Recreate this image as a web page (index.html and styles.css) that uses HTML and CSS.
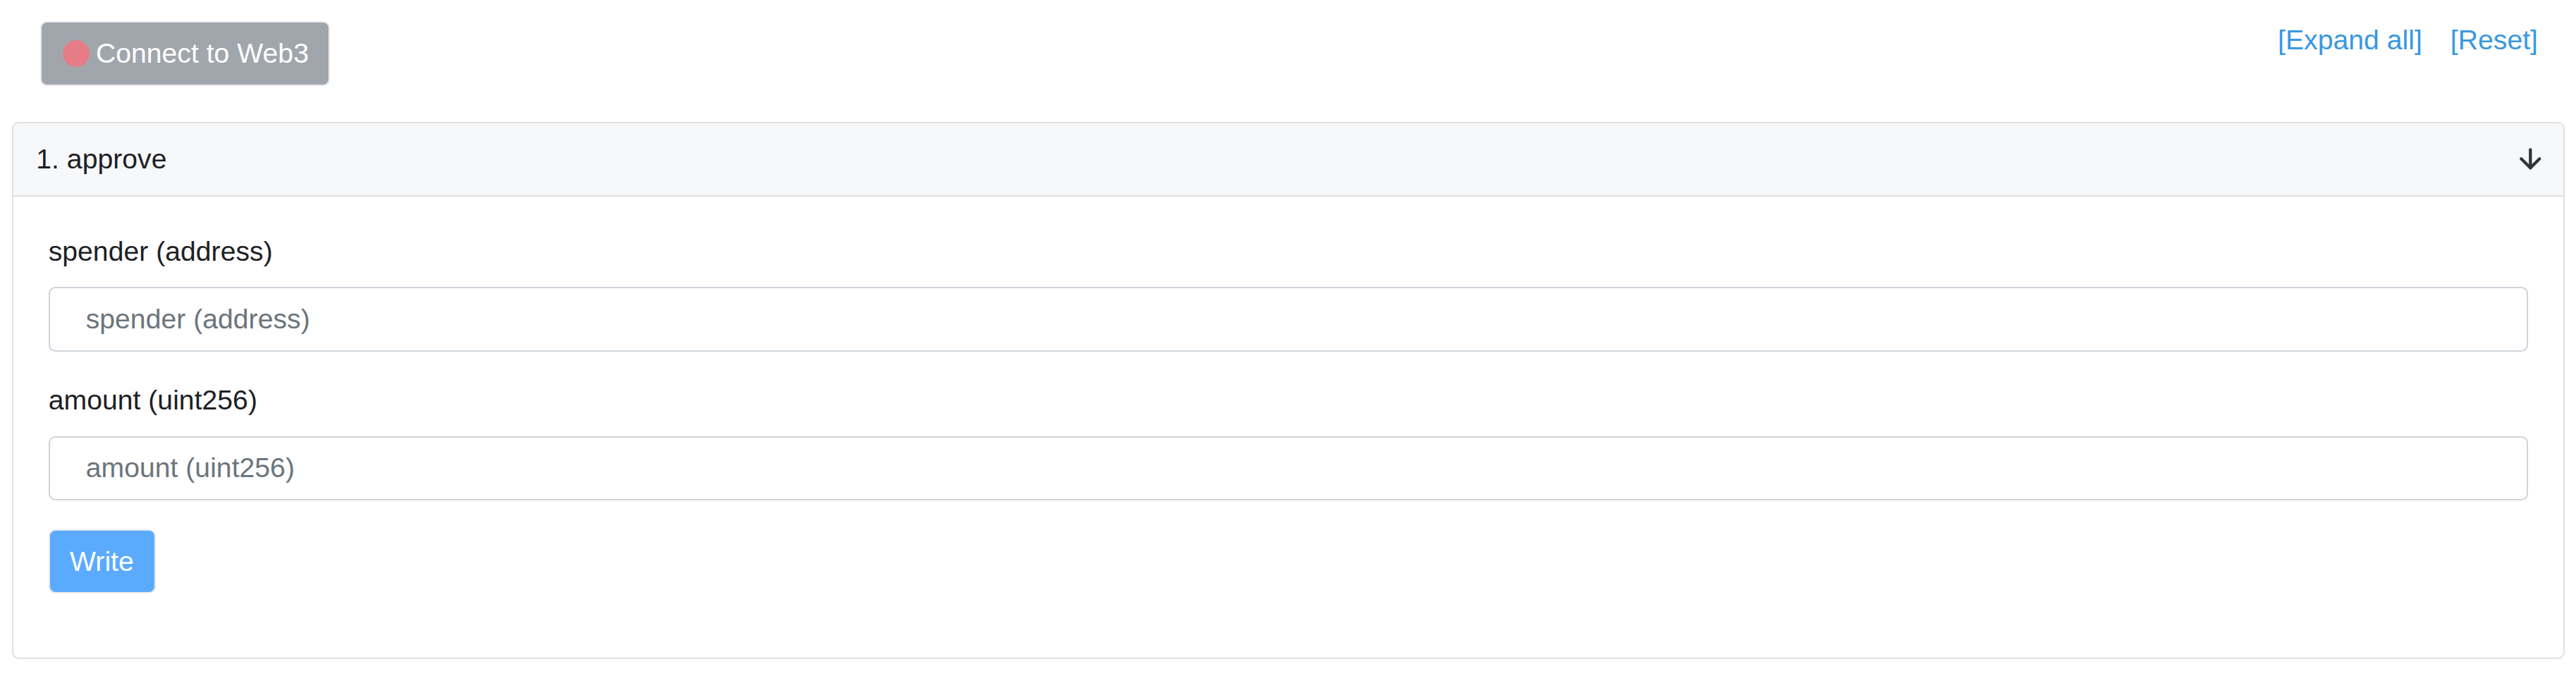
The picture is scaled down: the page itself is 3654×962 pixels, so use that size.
FILE: index.html
```html
<!DOCTYPE html>
<html lang="en">
<head>
<meta charset="utf-8">
<title>Write Contract</title>
<link rel="stylesheet" href="styles.css">
</head>
<body>
<div class="topbar">
  <button class="btn btn-connect" type="button"><span class="dot"></span><span>Connect to Web3</span></button>
  <div class="links">
    <a class="link" href="#">[Expand all]</a>
    <a class="link" href="#">[Reset]</a>
  </div>
</div>
<div class="card">
  <div class="card-header">
    <span class="card-title">1. approve</span>
    <svg class="arrow" viewBox="0 0 24 24" fill="none" stroke="currentColor" stroke-width="2.3" stroke-linecap="round" stroke-linejoin="round"><line x1="12" y1="5" x2="12" y2="19"/><polyline points="19 12 12 19 5 12"/></svg>
  </div>
  <div class="card-body">
    <div class="form-group">
      <label class="label">spender (address)</label>
      <input class="input" type="text" placeholder="spender (address)">
    </div>
    <div class="form-group">
      <label class="label">amount (uint256)</label>
      <input class="input" type="text" placeholder="amount (uint256)">
    </div>
    <button class="btn btn-write" type="button">Write</button>
  </div>
</div>
</body>
</html>
```

FILE: styles.css
```css
html, body {
  margin: 0;
  padding: 0;
  background: #ffffff;
}
body {
  font-family: "Liberation Sans", Arial, sans-serif;
  font-size: 39.2px;
  line-height: 57.6px;
  color: #1d2125;
}
.topbar {
  display: flex;
  justify-content: space-between;
  align-items: flex-start;
  padding: 30px 54px 0 56.7px;
  margin-bottom: 51px;
}
.btn {
  display: inline-flex;
  align-items: center;
  box-sizing: border-box;
  height: 91.7px;
  border: 2.4px solid #e8eaed;
  border-radius: 9.6px;
  color: #ffffff;
  font-family: inherit;
  font-size: 39.2px;
  line-height: 57.6px;
  cursor: pointer;
}
.btn-connect {
  background: #a1a6ad;
  padding: 14.4px 28px 14.4px 30.2px;
}
.dot {
  width: 38px;
  height: 38px;
  border-radius: 50%;
  background: #e67c86;
  margin-right: 9px;
  flex: none;
}
.links {
  display: flex;
  gap: 40px;
  margin-top: -2px;
}
.link {
  color: #3898e0;
  text-decoration: none;
}
.card {
  margin: 0 16.4px 0 16.7px;
  border: 2.4px solid #dfe0e1;
  border-radius: 9.6px;
  overflow: hidden;
}
.card-header {
  display: flex;
  justify-content: space-between;
  align-items: center;
  background: #f7f8fa;
  border-bottom: 2.4px solid #dfe0e1;
  padding: 28px 24px 28px 32.6px;
  line-height: 46px;
}
.card-title {
  color: #1d2125;
}
.arrow {
  width: 44.6px;
  height: 44.6px;
  color: #2f3439;
  display: block;
}
.card-body {
  padding: 49.6px 50px 90.5px 50px;
}
.form-group {
  margin-bottom: 40.5px;
}
.label {
  display: block;
  margin-bottom: 21.5px;
  color: #1d2125;
}
.input {
  display: block;
  box-sizing: border-box;
  width: 100%;
  height: 91.6px;
  padding: 14.4px 40px 14.4px 51px;
  border: 2.4px solid #ced4da;
  border-radius: 9.6px;
  font-family: inherit;
  font-size: 39.2px;
  line-height: 57.6px;
  color: #495057;
  background: #ffffff;
  outline: none;
}
.input::placeholder {
  color: #6c757d;
  opacity: 1;
}
.btn-write {
  background: #5aabfe;
  padding: 14.4px 29px 14.4px 28.4px;
}
```
